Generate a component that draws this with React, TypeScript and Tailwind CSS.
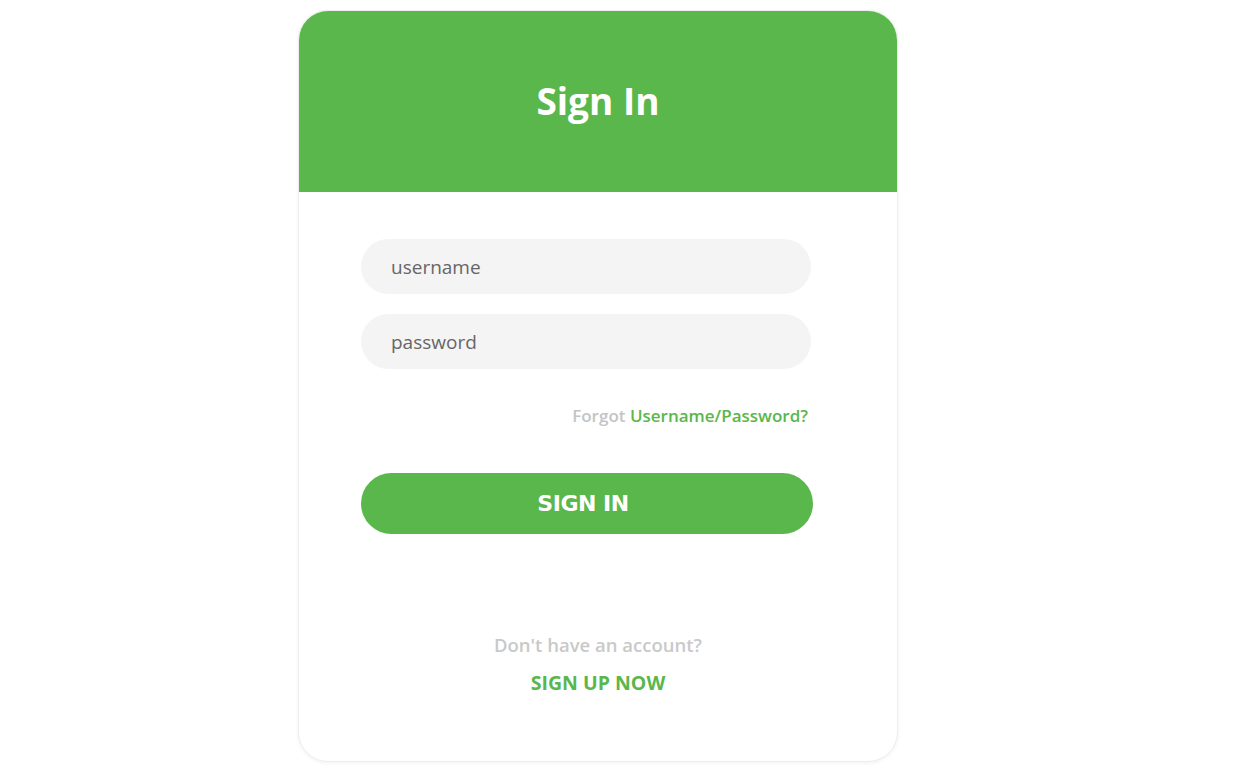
export default function App() {
  return (
    <div className="min-h-[776px] bg-white pt-[10px] pl-[298px]" style={{ fontFamily: '"Open Sans", "Noto Sans", sans-serif' }}>
      <div className="w-[600px] h-[752px] rounded-[30px] bg-white border border-[#eeeeee] shadow-[0_1px_4px_rgba(0,0,0,0.06)] overflow-hidden flex flex-col">
        <div className="h-[181px] bg-[#5ab74b] flex items-center justify-center">
          <h1 className="text-white text-[37px] font-bold -mt-[2px]">Sign In</h1>
        </div>

        <form className="pl-[62px] pt-[47px] flex flex-col">
          <input
            type="text"
            placeholder="username"
            className="w-[450px] h-[55px] rounded-full bg-[#f5f4f4] pl-[30px] text-[19px] text-[#555] placeholder:text-[#666] outline-none"
          />
          <input
            type="password"
            placeholder="password"
            className="mt-[20px] w-[450px] h-[55px] rounded-full bg-[#f5f4f4] pl-[30px] text-[19px] text-[#555] placeholder:text-[#666] outline-none"
          />
          <div className="w-[447px] mt-[35px] text-right text-[17px] font-semibold leading-[24px]">
            <span className="text-[#c4c4c4]">Forgot </span>
            <a href="#" className="text-[#5ab74b]">Username/Password?</a>
          </div>
          <button
            type="button"
            className="mt-[45px] w-[452px] h-[61px] rounded-full bg-[#5ab74b] text-white text-[22px] font-bold tracking-[-0.5px] pr-[8px]"
            style={{ fontFamily: '"DejaVu Sans", Verdana, sans-serif' }}
          >
            SIGN IN
          </button>
        </form>

        <div className="mt-[98px] flex flex-col items-center">
          <p className="text-[#c9c9c9] text-[18.5px] font-semibold leading-[26px]">Don't have an account?</p>
          <a href="#" className="mt-[12px] text-[#5ab74b] text-[19.5px] font-bold leading-[26px]">SIGN UP NOW</a>
        </div>
      </div>
    </div>
  )
}
